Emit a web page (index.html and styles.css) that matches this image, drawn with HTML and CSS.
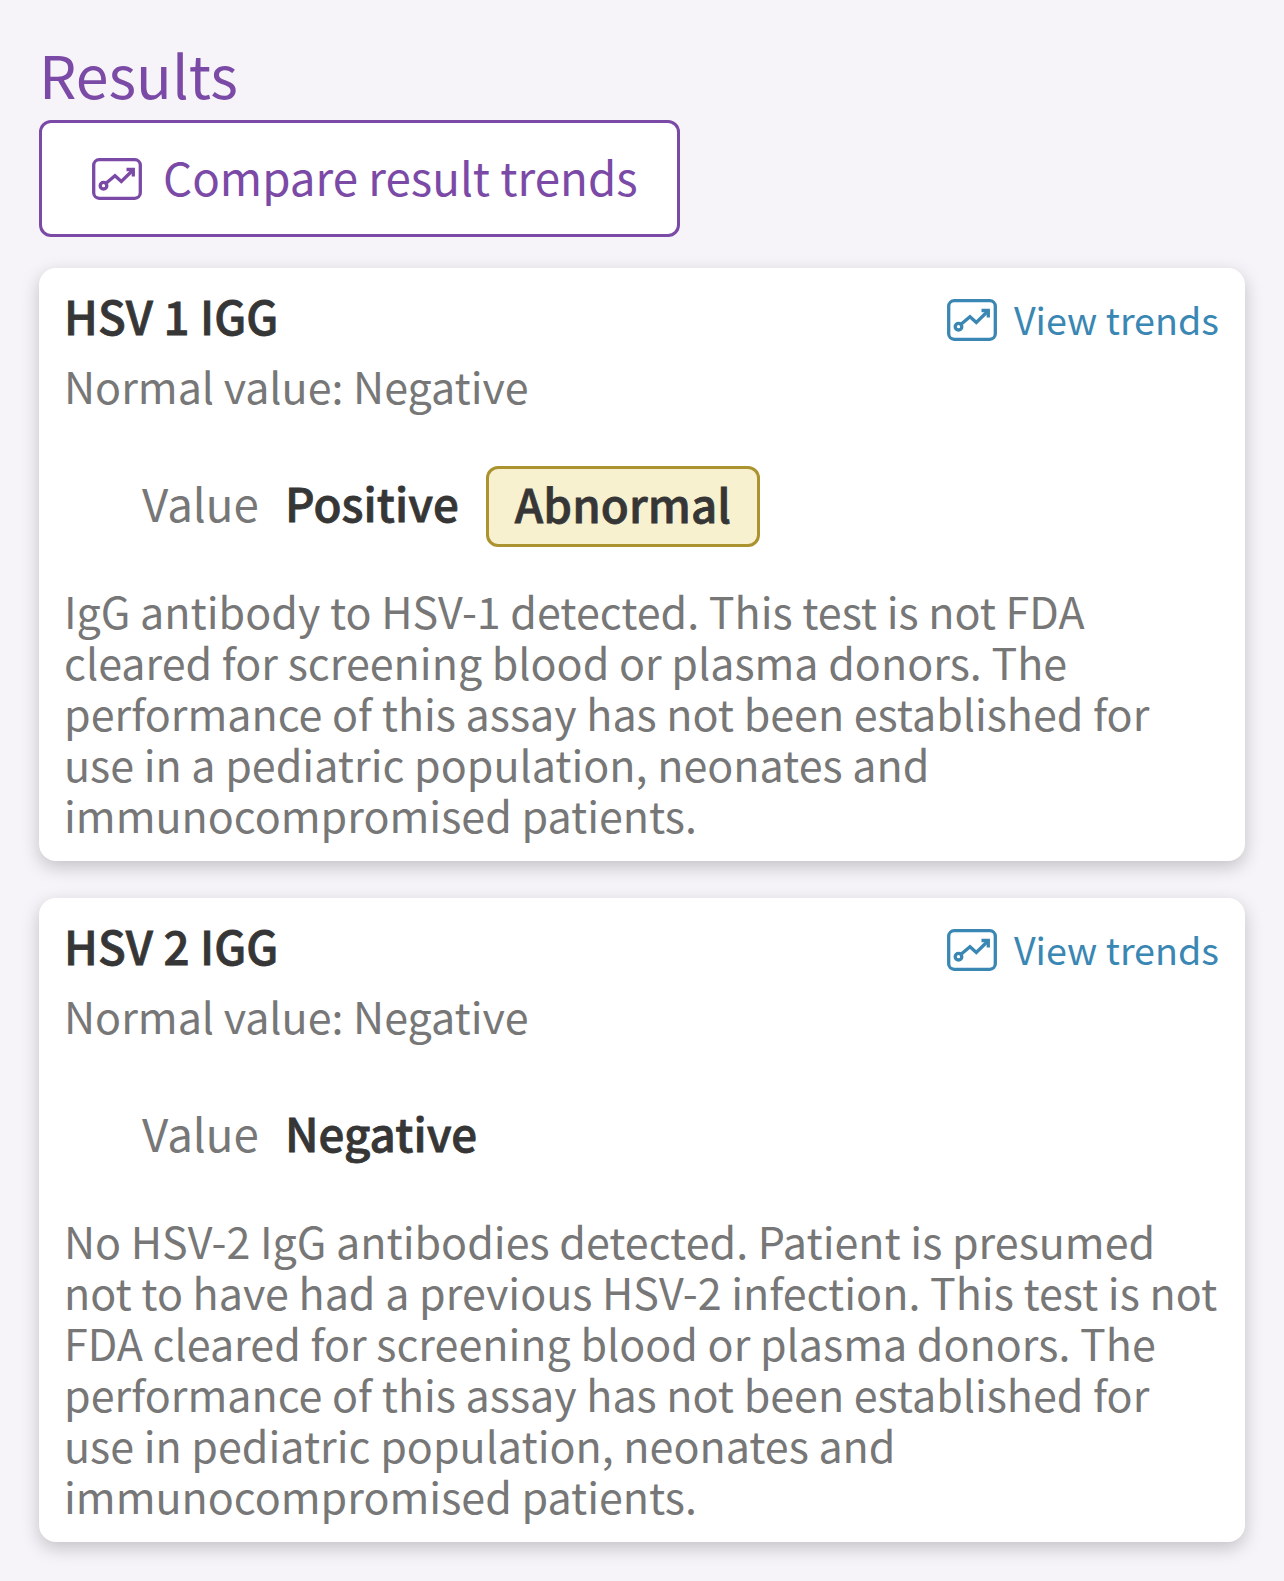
FILE: index.html
```html
<!DOCTYPE html>
<html lang="en">
<head>
  <meta charset="UTF-8" />
  <title>Test Results</title>
  <link rel="stylesheet" href="styles.css">
</head>
<body>
  <h1>Results</h1>

  <button class="compare">
    <svg class="icon" viewBox="0 0 50 42">
      <rect x="1.7" y="1.7" width="46.6" height="38.6" rx="5.5" />
      <circle cx="11.5" cy="27.7" r="3.3" />
      <path d="M14 25.3 L23 17.8 L29.3 23.5 L40.5 12.5" />
      <path class="tip" d="M34.5 11.5 H41.3 V18.5" />
    </svg>
    <span>Compare result trends</span>
  </button>

  <div class="card">
    <div class="card-header">
      <h2>HSV 1 IGG</h2>
      <a class="trends">
        <svg class="icon" viewBox="0 0 50 42">
          <rect x="1.7" y="1.7" width="46.6" height="38.6" rx="5.5" />
          <circle cx="11.5" cy="27.7" r="3.3" />
          <path d="M14 25.3 L23 17.8 L29.3 23.5 L40.5 12.5" />
          <path class="tip" d="M34.5 11.5 H41.3 V18.5" />
        </svg>
        <span>View trends</span>
      </a>
    </div>
    <div class="normal">Normal value: Negative</div>
    <div class="value-row">
      <span class="label">Value</span>
      <span class="value">Positive</span>
      <span class="badge">Abnormal</span>
    </div>
    <p>IgG antibody to HSV-1 detected. This test is not FDA<br>
      cleared for screening blood or plasma donors. The<br>
      performance of this assay has not been established for<br>
      use in a pediatric population, neonates and<br>
      immunocompromised patients.</p>
  </div>

  <div class="card">
    <div class="card-header">
      <h2>HSV 2 IGG</h2>
      <a class="trends">
        <svg class="icon" viewBox="0 0 50 42">
          <rect x="1.7" y="1.7" width="46.6" height="38.6" rx="5.5" />
          <circle cx="11.5" cy="27.7" r="3.3" />
          <path d="M14 25.3 L23 17.8 L29.3 23.5 L40.5 12.5" />
          <path class="tip" d="M34.5 11.5 H41.3 V18.5" />
        </svg>
        <span>View trends</span>
      </a>
    </div>
    <div class="normal">Normal value: Negative</div>
    <div class="value-row">
      <span class="label">Value</span>
      <span class="value">Negative</span>
    </div>
    <p>No HSV-2 IgG antibodies detected. Patient is presumed<br>
      not to have had a previous HSV-2 infection. This test is not<br>
      FDA cleared for screening blood or plasma donors. The<br>
      performance of this assay has not been established for<br>
      use in pediatric population, neonates and<br>
      immunocompromised patients.</p>
  </div>
</body>
</html>
```
FILE: styles.css
```css
* {
  box-sizing: border-box;
}

body {
  margin: 0;
  padding: 38px 39px 0;
  background: #f6f4f9;
  color: #777;
  font-family: "Noto Sans CJK SC", "Noto Sans", sans-serif;
}

h1, h2, p {
  margin: 0;
}

h1 {
  height: 82px;
  line-height: 71px;
  font-size: 59px;
  font-weight: 400;
  color: #7b4aa6;
}

.icon {
  flex: none;
  width: 50px;
  height: 42px;
  fill: none;
  stroke: currentColor;
  stroke-width: 3.3;
}

.compare {
  display: flex;
  align-items: center;
  gap: 21px;
  width: 641px;
  height: 117px;
  margin-bottom: 31px;
  padding: 0 0 0 50px;
  border: 3px solid #7b4aa6;
  border-radius: 12px;
  background: #fff;
  color: #7b4aa6;
  font-family: inherit;
  font-size: 45.7px;
  white-space: nowrap;
}

.compare span {
  padding-bottom: 5px;
}

.card {
  height: 593px;
  margin-bottom: 37px;
  padding: 20px 26px 0 25px;
  border-radius: 17px;
  background: #fff;
  box-shadow: 0 6px 18px rgba(0, 0, 0, 0.21);
}

.card + .card {
  height: 644px;
}

.card-header {
  display: flex;
  justify-content: space-between;
  height: 64px;
}

h2 {
  line-height: 54px;
  font-size: 45.7px;
}

h2, .value, .badge {
  font-weight: 500;
  letter-spacing: 0.1px;
  color: #363636;
  -webkit-text-stroke: 0.8px #363636;
}

.trends {
  display: flex;
  align-items: center;
  gap: 17px;
  height: 64px;
  font-size: 37.7px;
  color: #3a87b3;
}

.trends span {
  padding-bottom: 4px;
}

.normal {
  height: 72px;
  line-height: 67px;
  font-size: 43px;
}

.value-row {
  display: flex;
  align-items: center;
  height: 164px;
  padding-left: 78px;
  font-size: 45.7px;
}

.label, .value {
  padding-bottom: 9px;
}

.value {
  margin-left: 26px;
}

.badge {
  margin-left: 27px;
}

.badge {
  width: 274px;
  height: 81px;
  line-height: 68px;
  text-align: center;
  border: 3px solid #ab932f;
  border-radius: 12px;
  background: #f8f1cf;
}

p {
  margin-top: -3px;
  line-height: 51px;
  font-size: 43px;
  white-space: nowrap;
}
```
